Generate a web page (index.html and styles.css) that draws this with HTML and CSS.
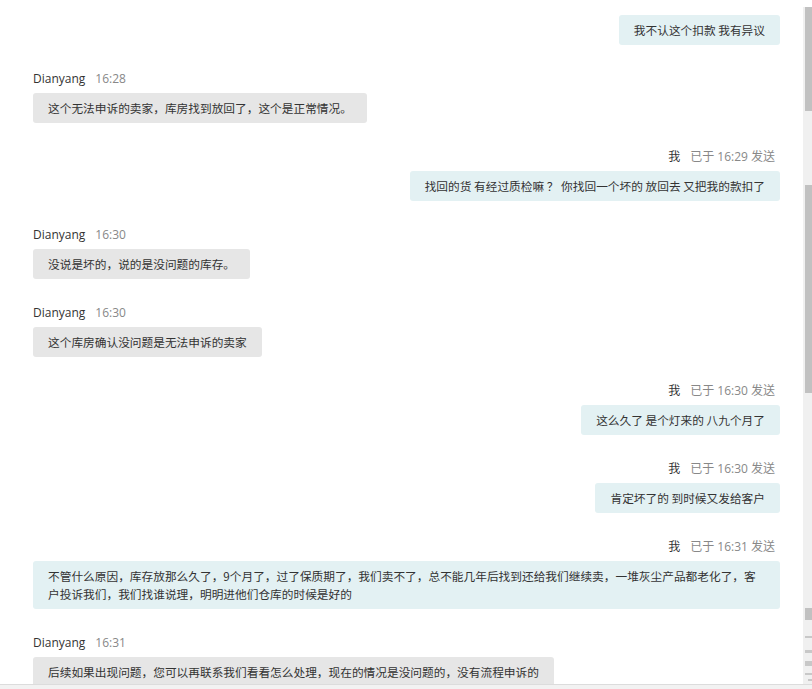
FILE: index.html
```html
<!DOCTYPE html>
<html lang="zh-CN">
<head>
    <meta charset="UTF-8">
    <title>聊天记录</title>
    <link rel="stylesheet" href="styles.css">
</head>
<body>
    <div class="window">
        <div class="chat">
            <div class="msg mine">
                <div class="bubble">我不认这个扣款 我有异议</div>
            </div>

            <div class="msg">
                <div class="meta"><span class="who">Dianyang</span><span class="time">16:28</span></div>
                <div class="bubble">这个无法申诉的卖家，库房找到放回了，这个是正常情况。</div>
            </div>

            <div class="msg mine">
                <div class="meta"><span class="who">我</span><span class="time">已于 16:29 发送</span></div>
                <div class="bubble">找回的货 有经过质检嘛 ？ 你找回一个坏的 放回去 又把我的款扣了</div>
            </div>

            <div class="msg">
                <div class="meta"><span class="who">Dianyang</span><span class="time">16:30</span></div>
                <div class="bubble">没说是坏的，说的是没问题的库存。</div>
            </div>

            <div class="msg">
                <div class="meta"><span class="who">Dianyang</span><span class="time">16:30</span></div>
                <div class="bubble">这个库房确认没问题是无法申诉的卖家</div>
            </div>

            <div class="msg mine">
                <div class="meta"><span class="who">我</span><span class="time">已于 16:30 发送</span></div>
                <div class="bubble">这么久了 是个灯来的 八九个月了</div>
            </div>

            <div class="msg mine">
                <div class="meta"><span class="who">我</span><span class="time">已于 16:30 发送</span></div>
                <div class="bubble">肯定坏了的 到时候又发给客户</div>
            </div>

            <div class="msg mine">
                <div class="meta"><span class="who">我</span><span class="time">已于 16:31 发送</span></div>
                <div class="bubble">不管什么原因，库存放那么久了，9个月了，过了保质期了，我们卖不了，总不能几年后找到还给我们继续卖，一堆灰尘产品都老化了，客户投诉我们，我们找谁说理，明明进他们仓库的时候是好的</div>
            </div>

            <div class="msg">
                <div class="meta"><span class="who">Dianyang</span><span class="time">16:31</span></div>
                <div class="bubble">后续如果出现问题，您可以再联系我们看看怎么处理，现在的情况是没问题的，没有流程申诉的</div>
            </div>
        </div>

        <!-- 右侧滚动条 -->
        <div class="rail">
            <div class="thumb t1"></div>
            <div class="thumb t2"></div>
            <div class="thumb t3"></div>
            <div class="tick k1"></div>
            <div class="tick k2"></div>
            <div class="tick k3"></div>
            <div class="tick k4"></div>
            <div class="tick k5"></div>
        </div>
    </div>
    <div class="footer"></div>
</body>
</html>
```

FILE: styles.css
```css
/* 页面基础 */
html, body {
    margin: 0;
    padding: 0;
    width: 812px;
    height: 689px;
    overflow: hidden;
    background: #fff;
    font-family: "Noto Sans CJK SC", "Noto Sans", sans-serif;
    color: #333;
}

.window {
    display: flex;
    height: 684px;
}

/* 聊天区域 */
.chat {
    flex: 1;
    display: flex;
    flex-direction: column;
    gap: 25px;
    padding: 15px 23px 0 33px;
    overflow: hidden;
}

.msg {
    display: flex;
    flex-direction: column;
    align-items: flex-start;
}

.msg.mine {
    align-items: flex-end;
}

.meta {
    display: flex;
    gap: 10px;
    height: 16px;
    line-height: 18px;
    margin-bottom: 7px;
    font-size: 12px;
    font-family: "Open Sans", "Noto Sans CJK SC", sans-serif;
}

.msg.mine .meta {
    margin-right: 5px;
}

.who {
    color: #333;
}

.time {
    color: #888;
}

.bubble {
    padding: 6px 15px;
    font-size: 11.7px;
    line-height: 18px;
    background: #e6e6e6;
    border-radius: 3px;
    max-width: 717px;
    flex-shrink: 0;
}

.msg.mine .bubble {
    background: #e3f1f3;
}

/* 右侧滚动条 */
.rail {
    width: 9px;
    margin-top: 7px;
    background: #f0f0f0;
    position: relative;
}

.thumb, .tick {
    position: absolute;
    right: 0;
    width: 7px;
    background: #c1c1c1;
}

.t1 { top: 0; height: 104px; }
.t2 { top: 178px; height: 208px; }
.t3 { top: 601px; height: 12px; }

.tick { background: #c8c8c8; }
.k1 { top: 629px; height: 2px; }
.k2 { top: 643px; height: 3px; }
.k3 { top: 654px; height: 5px; }
.k4 { top: 666px; height: 2px; }
.k5 { top: 672px; height: 2px; width: 4px; }

.footer {
    height: 5px;
    border-top: 1px solid #dcdcdc;
    background: #f2f2f2;
    box-sizing: border-box;
}
```
